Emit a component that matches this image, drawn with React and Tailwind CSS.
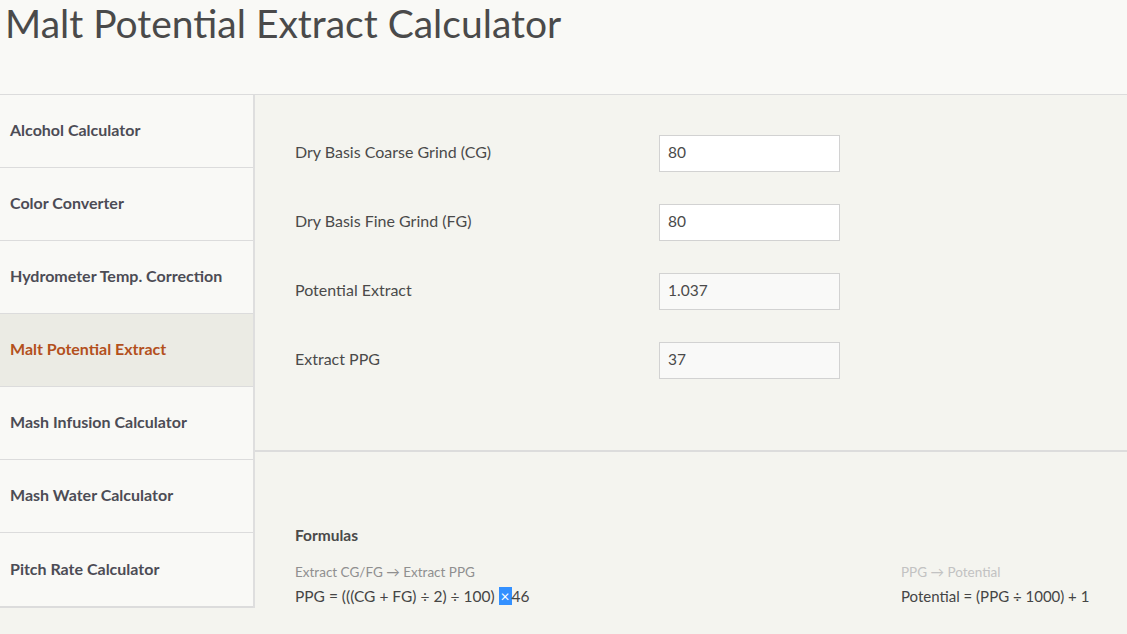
import { useState } from 'react';

const tools = [
  'Alcohol Calculator',
  'Color Converter',
  'Hydrometer Temp. Correction',
  'Malt Potential Extract',
  'Mash Infusion Calculator',
  'Mash Water Calculator',
  'Pitch Rate Calculator',
];

function Field({ label, value, readOnly, onChange }) {
  return (
    <div className="flex h-[37px] items-center">
      <label className="w-[364px] pb-[3px] text-[16px] text-[#4a4a4a]">{label}</label>
      <input
        className={`h-[37px] w-[181px] border border-[#d2d2d2] px-2 pb-[3px] text-[15.5px] text-[#4a4a4a] outline-none ${
          readOnly ? 'bg-[#f9f9f8]' : 'bg-white'
        }`}
        value={value}
        readOnly={readOnly}
        onChange={onChange}
      />
    </div>
  );
}

export default function App() {
  const [cg, setCg] = useState('80');
  const [fg, setFg] = useState('80');

  const ppg = Math.round(((Number(cg) + Number(fg)) / 2 / 100) * 46);
  const potential = (ppg / 1000 + 1).toFixed(3);

  return (
    <div
      className="min-h-[634px] bg-[#f4f4ef] text-[#4a4a4a]"
      style={{ fontFamily: 'Lato, "Open Sans", sans-serif' }}
    >
      <header className="h-[95px] border-b border-[#dcdcdc] bg-[#f9f9f6]">
        <h1 className="pl-[5px] text-[39px] font-normal leading-[46px] text-[#4a4a4a]">
          Malt Potential Extract Calculator
        </h1>
      </header>

      <div className="flex">
        <aside className="w-[255px] shrink-0 border-r-2 border-[#dedede]">
          <nav className="border-b-2 border-[#dcdcdc]">
            {tools.map((t, i) => (
              <a
                key={t}
                href="#"
                className={`flex h-[73px] items-center pb-[2px] pl-[10px] text-[16px] font-bold ${
                  i < tools.length - 1 ? 'border-b border-[#dcdcdc]' : ''
                } ${
                  t === 'Malt Potential Extract'
                    ? 'bg-[#ebebe4] text-[#b3501c]'
                    : 'bg-[#f9f9f6] text-[#4c4c55]'
                }`}
              >
                {t}
              </a>
            ))}
          </nav>
        </aside>

        <main className="flex-1">
          <section className="flex flex-col gap-[32px] border-b-2 border-[#dcdcdc] pb-[71px] pl-[40px] pt-[40px]">
            <Field label="Dry Basis Coarse Grind (CG)" value={cg} onChange={(e) => setCg(e.target.value)} />
            <Field label="Dry Basis Fine Grind (FG)" value={fg} onChange={(e) => setFg(e.target.value)} />
            <Field label="Potential Extract" value={potential} readOnly />
            <Field label="Extract PPG" value={ppg} readOnly />
          </section>

          <section className="pl-[40px] pr-[37px] pt-[72px]">
            <h3 className="text-[15.5px] font-bold text-[#4a4a4a]">Formulas</h3>
            <div className="mt-[15px] flex justify-between">
              <div>
                <p className="text-[13.5px] text-[#8f8f8f]">Extract CG/FG → Extract PPG</p>
                <p className="mt-[2px] text-[15.5px] text-[#454545]">
                  PPG = (((CG + FG) ÷ 2) ÷ 100){' '}
                  <span className="bg-[#3390ff] px-[2px] text-white">×</span>46
                </p>
              </div>
              <div className="w-[189px]">
                <p className="text-[13.5px] text-[#c2c2c2]">PPG → Potential</p>
                <p className="mt-[2px] text-[15px] text-[#454545]">Potential = (PPG ÷ 1000) + 1</p>
              </div>
            </div>
          </section>
        </main>
      </div>
    </div>
  );
}
